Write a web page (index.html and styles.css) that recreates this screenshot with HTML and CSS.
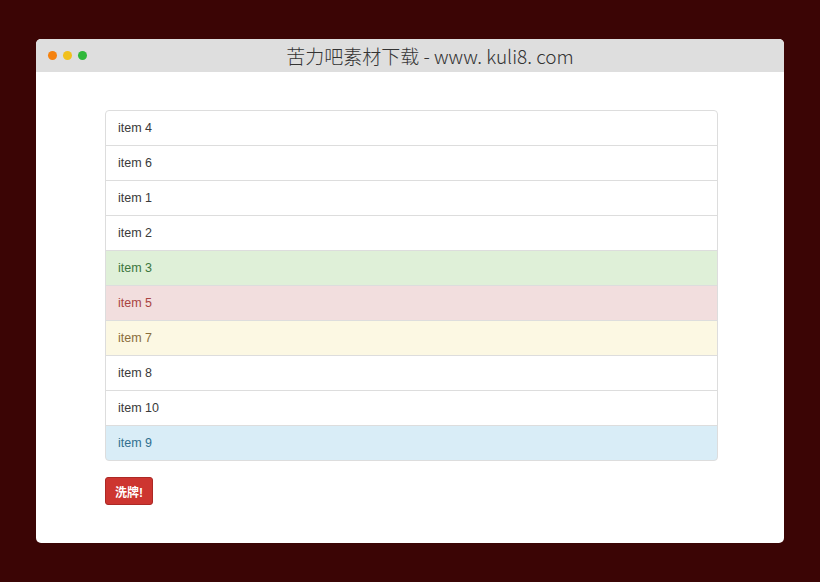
FILE: index.html
```html
<!DOCTYPE html>
<html lang="zh-CN">
<head>
    <meta charset="UTF-8">
    <meta name="viewport" content="width=device-width, initial-scale=1.0">
    <title>洗牌</title>
    <link rel="stylesheet" href="styles.css">
</head>
<body>
    <div class="window">
        <div class="titlebar">
            <div class="dots">
                <span class="dot orange"></span>
                <span class="dot yellow"></span>
                <span class="dot green"></span>
            </div>
            <div class="title">苦力吧素材下载 - www. kuli8. com</div>
        </div>
        <div class="content">
            <ul class="list">
                <li class="item">item 4</li>
                <li class="item">item 6</li>
                <li class="item">item 1</li>
                <li class="item">item 2</li>
                <li class="item success">item 3</li>
                <li class="item danger">item 5</li>
                <li class="item warning">item 7</li>
                <li class="item">item 8</li>
                <li class="item">item 10</li>
                <li class="item info">item 9</li>
            </ul>
            <button class="btn">洗牌!</button>
        </div>
    </div>
</body>
</html>
```

FILE: styles.css
```css
*{
    margin:0;
    padding:0;
    list-style:none;
    box-sizing:border-box;
}
body{
    background:#3b0505;
    padding:39px 36px 0 36px;
    font-family:"Helvetica Neue", "Liberation Sans", Arial, "Noto Sans CJK SC", sans-serif;
}
.window{
    width:748px;
    background:#fff;
    border-radius:5px;
    overflow:hidden;
}
.titlebar{
    height:33px;
    background:#dedede;
    display:flex;
    align-items:center;
    position:relative;
}
.dots{
    display:flex;
    gap:6px;
    padding-left:12px;
}
.dot{
    width:9px;
    height:9px;
    border-radius:50%;
}
.orange{ background:#f5820f; }
.yellow{ background:#f1c01c; }
.green{ background:#2fb83a; }
.title{
    position:absolute;
    left:40px;
    right:0;
    text-align:center;
    font-family:"Noto Sans CJK SC", "DejaVu Sans", sans-serif;
    font-weight:300;
    font-size:19px;
    color:#333;
}
.content{
    padding:38px 66px 38px 69px;
}
.list{
    margin-bottom:16px;
}
.item{
    padding:7px 12px;
    font-size:12.5px;
    line-height:20px;
    color:#3a3a3a;
    border:1px solid #ddd;
    margin-bottom:-1px;
    background:#fff;
}
.item:first-child{
    border-radius:4px 4px 0 0;
}
.item:last-child{
    border-radius:0 0 4px 4px;
    margin-bottom:0;
}
.success{ background:#dff0d8; color:#3c763d; }
.danger{ background:#f2dede; color:#a94442; }
.warning{ background:#fcf8e3; color:#8a6d3b; }
.info{ background:#d9edf7; color:#31708f; }
.btn{
    display:block;
    height:28px;
    padding:0 9px;
    font-size:12px;
    font-weight:bold;
    color:#fff;
    background:#cd3530;
    border:1px solid #ac2925;
    border-radius:3px;
    font-family:"Liberation Sans", "Noto Sans CJK SC", sans-serif;
}
```
